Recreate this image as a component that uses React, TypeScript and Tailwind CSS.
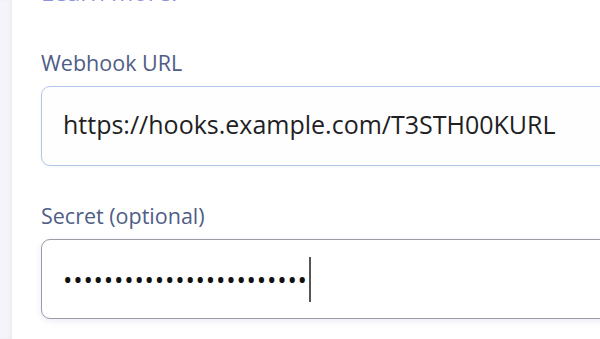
import React from 'react'

const font = { fontFamily: '"Open Sans", "Noto Sans", sans-serif' }

const App = () => {
  const secret = '•'.repeat(24)

  return (
    <div className="flex h-[339px] w-[600px] overflow-hidden bg-white" style={font}>
      {/* Left rail */}
      <div className="w-[12px] shrink-0 bg-[#f5f5f9] shadow-[inset_-2px_0_3px_rgba(0,0,0,0.04)]" />

      {/* Form panel */}
      <div className="flex-1 pl-[29px]">
        <p className="-mt-[22px] text-[24px] leading-[28px] text-[#8f91dc]">Learn more.</p>

        <label className="mt-[43px] block text-[21.5px] leading-[28px] text-[#4f5d86]">Webhook URL</label>
        <div className="mt-[9px] flex h-[80px] w-[600px] items-center rounded-[9px] border-[1.5px] border-[#b6c6ea] bg-[#fefeff] pb-[5px] pl-[21px] shadow-[0_1px_3px_rgba(80,100,180,0.08)]">
          <span className="text-[25px] leading-[34px] text-[#1f1f24]">https://hooks.example.com/T3STH00KURL</span>
        </div>

        <label className="mt-[36px] block text-[21.5px] leading-[28px] text-[#4f5d86]">Secret (optional)</label>
        <div className="mt-[9px] flex h-[80px] w-[600px] items-center rounded-[9px] border-[1.5px] border-[#9c9ca4] bg-white pl-[21px] shadow-[0_2px_6px_rgba(80,100,180,0.12)]">
          <span className="text-[25px] leading-[34px] tracking-[0.8px] text-[#111]">{secret}</span>
          <span className="ml-[1px] h-[45px] w-[2px] bg-[#555]" />
        </div>
      </div>
    </div>
  )
}

export default App
